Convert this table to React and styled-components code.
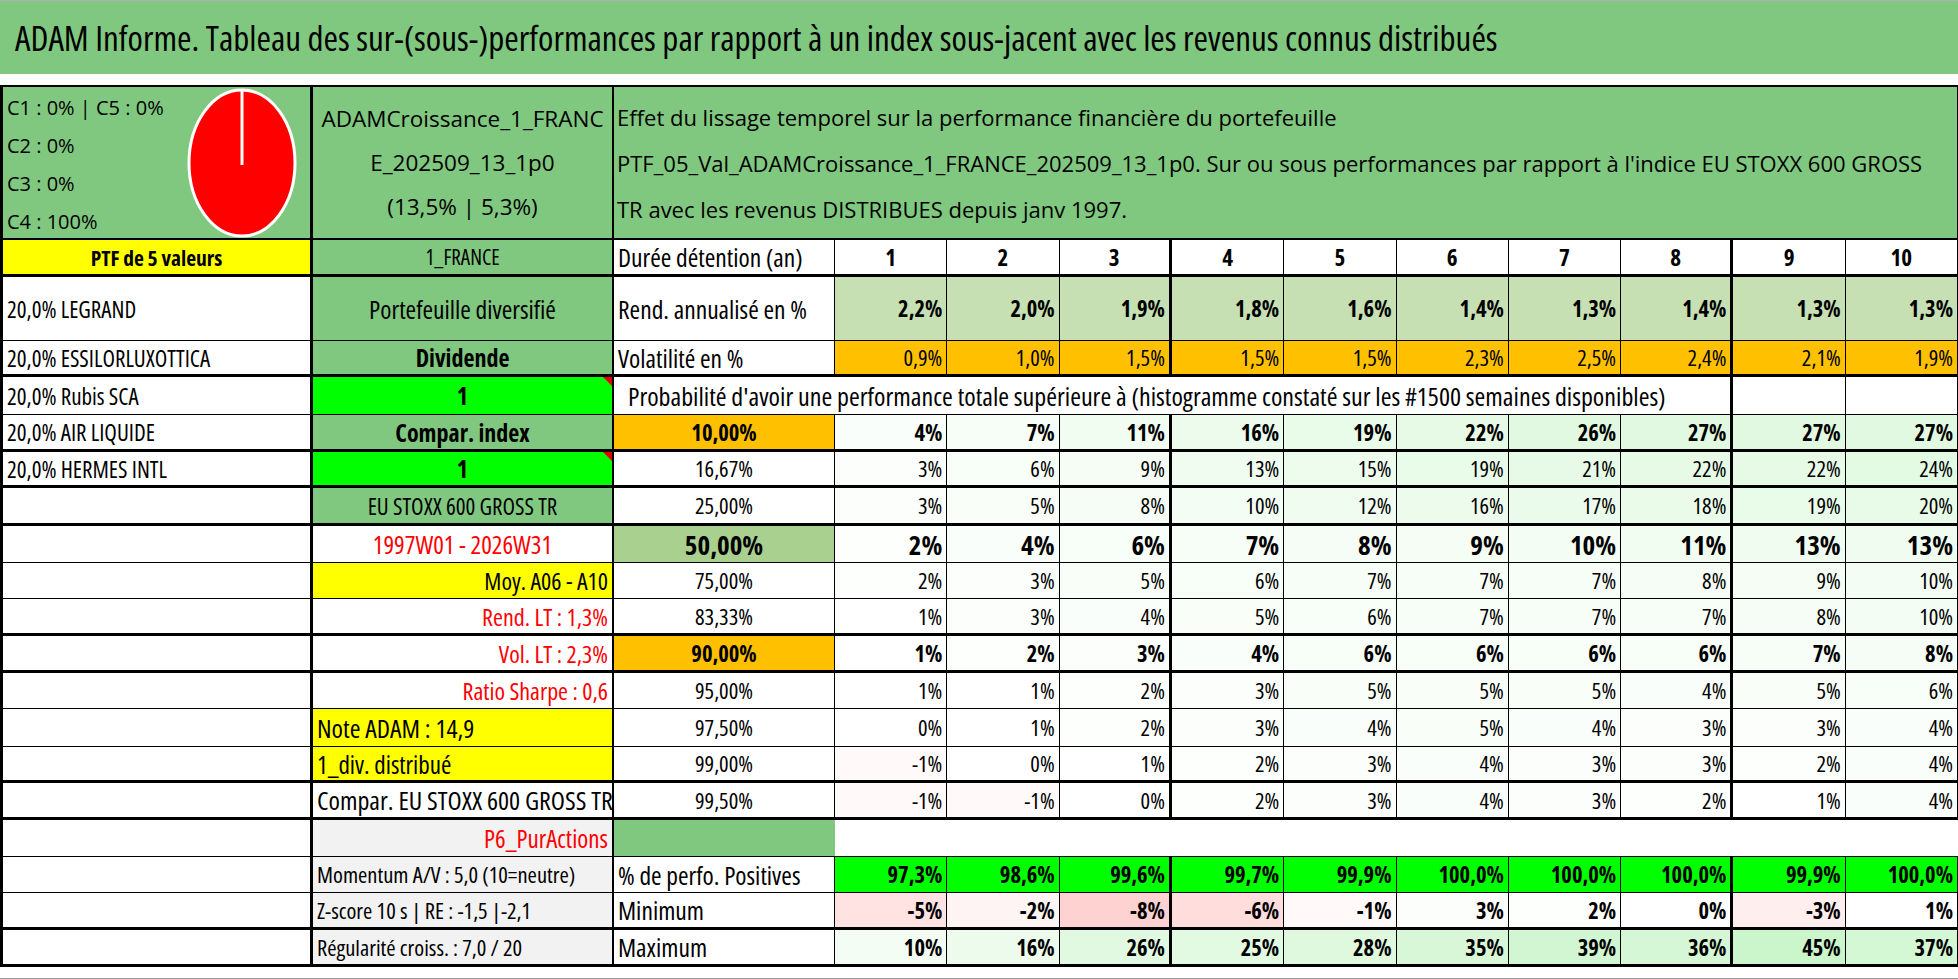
import React from 'react';
import styled, { createGlobalStyle } from 'styled-components';

const GREEN = '#80c880';
const LIGHT_GREEN = '#c6e0b4';
const MID_GREEN = '#a9d08e';
const ORANGE = '#ffc000';
const YELLOW = '#ffff00';
const FLASH = '#00ff00';
const GREY = '#f2f2f2';
const RED = '#ff0000';

// Open Sans ships a condensed face: it stands in for the squeezed Calibri of the sheet
const GlobalStyle = createGlobalStyle`
  body {
    margin: 0;
    background: #fff;
    color: #000;
    font-family: "Open Sans", "DejaVu Sans Condensed", sans-serif;
    font-stretch: 75%;
  }
`;

const Page = styled.div`
  width: 1958px;
  height: 979px;
  overflow: hidden;
`;

const TitleBar = styled.div`
  box-sizing: border-box;
  height: 74px;
  background: ${GREEN};
  border-top: 1px solid #b0b0b0;
  display: flex;
  align-items: center;
  padding-left: 15px;
  font-size: 35px;
  white-space: nowrap;
`;

const Spacer = styled.div`
  height: 11px;
`;

const Sheet = styled.div`
  display: grid;
  grid-template-columns: 310px 301px 221px repeat(10, 1fr);
  grid-template-rows: 153px 37px 64px 36px 38px 37px 36px 38px 37px 36px 37px 37px 36px 38px 36px 37px 37px 36px 37px 37px;
  border-top: 2px solid #000;
  border-left: 3px solid #000;
`;

const Cell = styled.div`
  box-sizing: border-box;
  position: relative;
  display: flex;
  align-items: center;
  justify-content: ${(p) =>
    p.$align === 'left' ? 'flex-start' : p.$align === 'right' ? 'flex-end' : 'center'};
  padding: 0 4px;
  grid-column: ${(p) => (p.$span ? `span ${p.$span}` : 'auto')};
  background: ${(p) => p.$bg || '#fff'};
  color: ${(p) => p.$color || '#000'};
  font-size: ${(p) => p.$size || 22.5}px;
  font-weight: ${(p) => (p.$bold ? 700 : 400)};
  border-right: ${(p) => (p.$br ?? 1)}px solid #000;
  border-bottom: ${(p) => (p.$bb ?? 1)}px solid #000;
  white-space: nowrap;
  overflow: hidden;
`;

const TextCell = styled(Cell)`
  padding-left: ${(p) => p.$indent || 4}px;
`;

const Flag = styled.span`
  position: absolute;
  top: 0;
  right: 0;
  border-top: 9px solid #e00000;
  border-left: 9px solid transparent;
`;

const LegendCell = styled(Cell)`
  justify-content: space-between;
  align-items: stretch;
  padding: 0 13px 0 4px;
`;

const LegendList = styled.div`
  display: flex;
  flex-direction: column;
  padding-top: 2px;
  font-size: 20px;
  font-stretch: 100%;
  line-height: 38px;
`;

const PieBox = styled.div`
  display: flex;
  align-items: center;
`;

const NameCell = styled(Cell)`
  flex-direction: column;
  font-size: 22.5px;
  font-stretch: 100%;
  line-height: 44px;
`;

const NoteCell = styled(Cell)`
  flex-direction: column;
  align-items: flex-start;
  justify-content: center;
  padding-left: 3px;
  font-size: 22px;
  font-stretch: 100%;
  line-height: 46px;
`;

const BottomEdge = styled.div`
  height: 12px;
  border-bottom: 1px solid #9a9a9a;
  box-sizing: border-box;
`;

const pct = (v, d = 0) => `${v.toFixed(d).replace('.', ',')}%`;

// conditional formatting of the probability table
const shade = (v) => {
  if (v < 0) {
    const t = Math.min(1, -v / 8);
    const c = Math.round(255 - 45 * t);
    return `rgb(255, ${c}, ${c})`;
  }
  const t = Math.min(1, v / 45);
  return `rgb(${Math.round(255 - 52 * t)}, ${Math.round(255 - 10 * t)}, ${Math.round(255 - 52 * t)})`;
};

const THICK_COLS = [2, 7];

const rend = [2.2, 2.0, 1.9, 1.8, 1.6, 1.4, 1.3, 1.4, 1.3, 1.3];
const vol = [0.9, 1.0, 1.5, 1.5, 1.5, 2.3, 2.5, 2.4, 2.1, 1.9];

const probaRows = [
  { seuil: '10,00%', bg: ORANGE, bold: true, v: [4, 7, 11, 16, 19, 22, 26, 27, 27, 27] },
  { seuil: '16,67%', v: [3, 6, 9, 13, 15, 19, 21, 22, 22, 24] },
  { seuil: '25,00%', v: [3, 5, 8, 10, 12, 16, 17, 18, 19, 20] },
  { seuil: '50,00%', bg: MID_GREEN, bold: true, size: 27, v: [2, 4, 6, 7, 8, 9, 10, 11, 13, 13] },
  { seuil: '75,00%', v: [2, 3, 5, 6, 7, 7, 7, 8, 9, 10] },
  { seuil: '83,33%', v: [1, 3, 4, 5, 6, 7, 7, 7, 8, 10] },
  { seuil: '90,00%', bg: ORANGE, bold: true, v: [1, 2, 3, 4, 6, 6, 6, 6, 7, 8] },
  { seuil: '95,00%', v: [1, 1, 2, 3, 5, 5, 5, 4, 5, 6] },
  { seuil: '97,50%', v: [0, 1, 2, 3, 4, 5, 4, 3, 3, 4] },
  { seuil: '99,00%', v: [-1, 0, 1, 2, 3, 4, 3, 3, 2, 4] },
  { seuil: '99,50%', v: [-1, -1, 0, 2, 3, 4, 3, 2, 1, 4] },
];

const positives = [97.3, 98.6, 99.6, 99.7, 99.9, 100, 100, 100, 99.9, 100];
const minimum = [-5, -2, -8, -6, -1, 3, 2, 0, -3, 1];
const maximum = [10, 16, 26, 25, 28, 35, 39, 36, 45, 37];

// left block (columns A and B) for each data row, top to bottom
const leftRows = [
  { bb: 1, a: '20,0% LEGRAND', b: { text: 'Portefeuille diversifié', bg: GREEN, size: 25.5 } },
  { bb: 3, a: '20,0% ESSILORLUXOTTICA', b: { text: 'Dividende', bg: GREEN, bold: true } },
  { bb: 1, a: '20,0% Rubis SCA', b: { text: '1', bg: FLASH, bold: true, flag: true } },
  { bb: 3, a: '20,0% AIR LIQUIDE', b: { text: 'Compar. index', bg: GREEN, bold: true } },
  { bb: 3, a: '20,0% HERMES INTL', b: { text: '1', bg: FLASH, bold: true, flag: true } },
  { bb: 3, b: { text: 'EU STOXX 600 GROSS TR', bg: GREEN, size: 23 } },
  { bb: 1, b: { text: '1997W01 - 2026W31', color: RED, size: 25 } },
  { bb: 1, b: { text: 'Moy. A06 - A10', bg: YELLOW, align: 'right' } },
  { bb: 3, b: { text: 'Rend. LT : 1,3%', color: RED, align: 'right' } },
  { bb: 3, b: { text: 'Vol. LT : 2,3%', color: RED, align: 'right' } },
  { bb: 1, b: { text: 'Ratio Sharpe : 0,6', color: RED, align: 'right' } },
  { bb: 1, b: { text: 'Note ADAM : 14,9', bg: YELLOW, align: 'left', size: 26 } },
  { bb: 3, b: { text: '1_div. distribué', bg: YELLOW, align: 'left', size: 25 } },
  { bb: 3, b: { text: 'Compar. EU STOXX 600 GROSS TR', align: 'left', size: 26 } },
  { bb: 1, b: { text: 'P6_PurActions', bg: GREY, color: RED, align: 'right', size: 25 } },
  { bb: 1, b: { text: 'Momentum A/V : 5,0 (10=neutre)', bg: GREY, align: 'left', size: 22.5 } },
  { bb: 3, b: { text: 'Z-score 10 s | RE : -1,5 |-2,1', bg: GREY, align: 'left', size: 22.5 } },
  { bb: 3, b: { text: 'Régularité croiss. : 7,0 / 20', bg: GREY, align: 'left', size: 22.5 } },
];

const colBorder = (i) => (THICK_COLS.includes(i) ? 3 : 1);

const NumberCells = ({ values, bb, bold, size, bg, fmt, align = 'right', bgFn }) =>
  values.map((v, i) => (
    <Cell
      key={i}
      $align={align}
      $bold={bold}
      $size={size}
      $bg={bgFn ? bgFn(v) : bg}
      $bb={bb}
      $br={colBorder(i)}
    >
      {fmt ? fmt(v) : v}
    </Cell>
  ));

const Pie = () => (
  <svg width="110" height="150" viewBox="0 0 110 150">
    <ellipse cx="55" cy="75" rx="53" ry="73" fill="#ff0000" stroke="#fff" strokeWidth="3" />
    <line x1="55" y1="3" x2="55" y2="77" stroke="#fff" strokeWidth="3" />
  </svg>
);

const Label = ({ bb, children }) => (
  <TextCell $align="left" $br={1} $bb={bb} $size={25.5}>
    {children}
  </TextCell>
);

const rightSide = (idx, bb) => {
  // column C + ten year columns, matched with leftRows index
  if (idx === 0)
    return [
      <Label key="c" bb={bb}>Rend. annualisé en %</Label>,
      ...NumberCells({ values: rend, bb, bold: true, bg: LIGHT_GREEN, fmt: (v) => pct(v, 1) }),
    ];
  if (idx === 1)
    return [
      <Label key="c" bb={bb}>Volatilité en %</Label>,
      ...NumberCells({ values: vol, bb, bg: ORANGE, fmt: (v) => pct(v, 1) }),
    ];
  if (idx === 2)
    return [
      <TextCell key="c" $align="left" $span={9} $br={3} $bb={bb} $indent={14} $size={26}>
        Probabilité d'avoir une performance totale supérieure à (histogramme constaté sur les #1500 semaines disponibles)
      </TextCell>,
      <Cell key="n9" $bb={bb} />,
      <Cell key="n10" $bb={bb} />,
    ];
  if (idx >= 3 && idx <= 13) {
    const r = probaRows[idx - 3];
    return [
      <Cell key="c" $bg={r.bg} $bold={r.bold} $size={r.size} $br={1} $bb={bb}>{r.seuil}</Cell>,
      ...NumberCells({ values: r.v, bb, bold: r.bold, size: r.size, bgFn: shade, fmt: (v) => pct(v) }),
    ];
  }
  if (idx === 14)
    return [
      <Cell key="c" $bg={GREEN} $br={0} $bb={bb} />,
      <Cell key="blank" $span={10} $br={0} $bb={bb} />,
    ];
  if (idx === 15)
    return [
      <Label key="c" bb={bb}>% de perfo. Positives</Label>,
      ...NumberCells({ values: positives, bb, bold: true, bg: FLASH, fmt: (v) => pct(v, 1) }),
    ];
  if (idx === 16)
    return [
      <Label key="c" bb={bb}>Minimum</Label>,
      ...NumberCells({ values: minimum, bb, bold: true, bgFn: shade, fmt: (v) => pct(v) }),
    ];
  return [
    <Label key="c" bb={bb}>Maximum</Label>,
    ...NumberCells({ values: maximum, bb, bold: true, bgFn: shade, fmt: (v) => pct(v) }),
  ];
};

const App = () => (
  <Page>
    <GlobalStyle />
    <TitleBar>
      ADAM Informe. Tableau des sur-(sous-)performances par rapport à un index sous-jacent avec les revenus connus distribués
    </TitleBar>
    <Spacer />
    <Sheet>
      <LegendCell $bg={GREEN} $br={3} $bb={2}>
        <LegendList>
          <span>C1 : 0% | C5 : 0%</span>
          <span>C2 : 0%</span>
          <span>C3 : 0%</span>
          <span>C4 : 100%</span>
        </LegendList>
        <PieBox>
          <Pie />
        </PieBox>
      </LegendCell>
      <NameCell $bg={GREEN} $br={2} $bb={2}>
        <span>ADAMCroissance_1_FRANC</span>
        <span>E_202509_13_1p0</span>
        <span>(13,5% | 5,3%)</span>
      </NameCell>
      <NoteCell $bg={GREEN} $span={11} $br={1} $bb={2}>
        <span>Effet du lissage temporel sur la performance financière du portefeuille</span>
        <span>PTF_05_Val_ADAMCroissance_1_FRANCE_202509_13_1p0. Sur ou sous performances par rapport à l'indice EU STOXX 600 GROSS</span>
        <span>TR avec les revenus DISTRIBUES depuis janv 1997.</span>
      </NoteCell>

      <Cell $bg={YELLOW} $bold $size={21.5} $br={3} $bb={3}>PTF de 5 valeurs</Cell>
      <Cell $bg={GREEN} $size={21} $br={2} $bb={3}>1_FRANCE</Cell>
      <Label bb={3}>Durée détention (an)</Label>
      {Array.from({ length: 10 }, (_, i) => (
        <Cell key={i} $bold $size={23} $bb={3} $br={colBorder(i)}>{i + 1}</Cell>
      ))}

      {leftRows.map((row, idx) => (
        <React.Fragment key={idx}>
          <Cell $align="left" $size={23} $br={3} $bb={row.bb}>{row.a || ''}</Cell>
          <Cell
            $align={row.b.align}
            $bg={row.b.bg}
            $color={row.b.color}
            $bold={row.b.bold}
            $size={row.b.size || 24}
            $br={2}
            $bb={row.bb}
          >
            {row.b.text}
            {row.b.flag && <Flag />}
          </Cell>
          {rightSide(idx, row.bb)}
        </React.Fragment>
      ))}
    </Sheet>
    <BottomEdge />
  </Page>
);

export default App;
